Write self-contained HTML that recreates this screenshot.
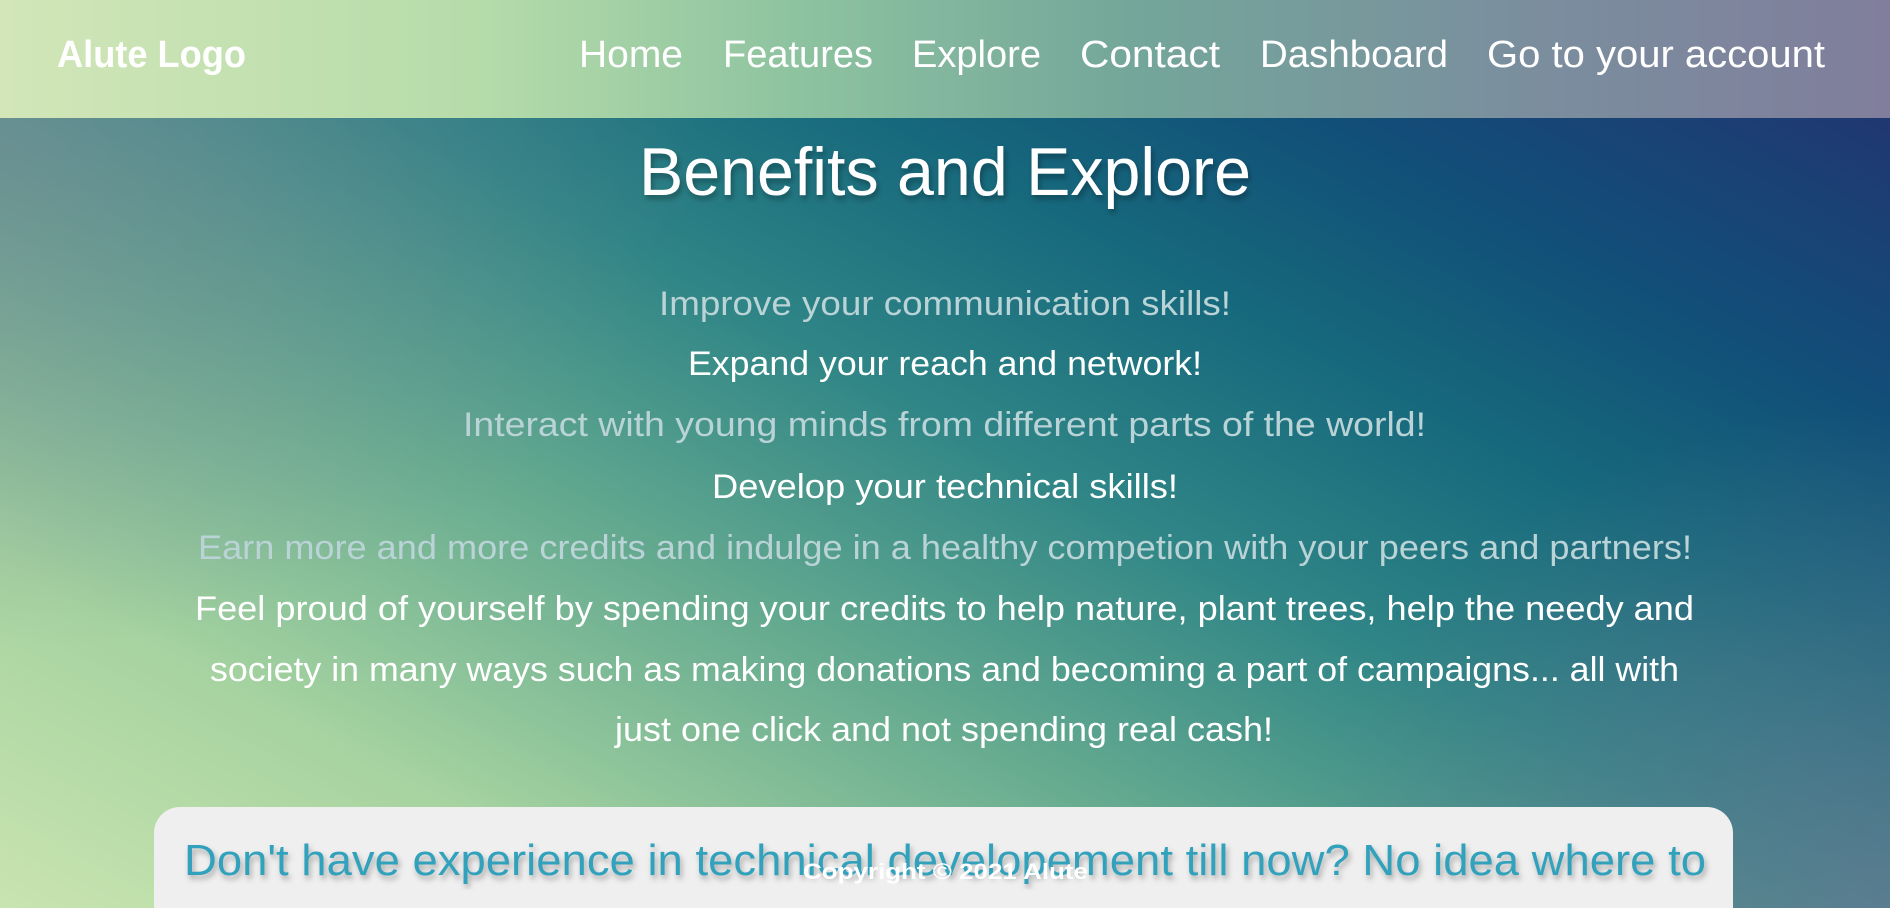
<!DOCTYPE html>
<html><head><meta charset="utf-8"><style>
html,body{margin:0;padding:0;width:1890px;height:908px;overflow:hidden}
.bg{position:absolute;left:0;top:0;width:1890px;height:908px;overflow:hidden;background:
radial-gradient(ellipse 700px 500px at 0px 150px,rgba(120,130,150,0.55),rgba(120,130,150,0) 100%),
radial-gradient(ellipse 600px 500px at 1890px 908px,rgba(120,120,150,0.6),rgba(120,120,150,0) 100%),
linear-gradient(28deg,#c9e4b0 0%,#a6d3a0 18%,#66ab90 36%,#2f8586 52%,#16687c 66%,#114f78 78%,#262e70 100%);}
.nav{position:absolute;left:0;top:0;width:1890px;height:118px;background:linear-gradient(90deg,#d2e6b8 0%,#b6dcaa 25%,#8ec3a0 42%,#74a69a 60%,#7a8f9e 80%,#807e9c 100%);}
.box{position:absolute;left:154px;top:807px;width:1579px;height:101px;background:#efefef;border-radius:26px 26px 0 0}
svg{position:absolute;left:0;top:0}
text{font-family:"Liberation Sans",sans-serif}
</style></head><body>
<div class="bg"></div>
<div class="nav"></div>
<div class="box"></div>
<svg width="1890" height="908">
<defs><filter id="sh"><feDropShadow dx="2" dy="4" stdDeviation="3" flood-color="#000" flood-opacity="0.3"/></filter></defs>
<g fill="#fff" font-size="38">
<text x="57" y="67" font-weight="bold" textLength="189" lengthAdjust="spacingAndGlyphs">Alute Logo</text>
<text x="579" y="67" textLength="104" lengthAdjust="spacingAndGlyphs">Home</text>
<text x="723" y="67" textLength="150" lengthAdjust="spacingAndGlyphs">Features</text>
<text x="912" y="67" textLength="129" lengthAdjust="spacingAndGlyphs">Explore</text>
<text x="1080" y="67" textLength="140" lengthAdjust="spacingAndGlyphs">Contact</text>
<text x="1260" y="67" textLength="188" lengthAdjust="spacingAndGlyphs">Dashboard</text>
<text x="1487" y="67" textLength="338" lengthAdjust="spacingAndGlyphs">Go to your account</text>
<text x="639" y="195" font-size="68" filter="url(#sh)" textLength="612" lengthAdjust="spacingAndGlyphs">Benefits and Explore</text>
</g>
<g font-size="34">
<text x="659" y="315" fill="#b9d3d6" textLength="572" lengthAdjust="spacingAndGlyphs">Improve your communication skills!</text>
<text x="688" y="375" fill="#fff" textLength="514" lengthAdjust="spacingAndGlyphs">Expand your reach and network!</text>
<text x="463" y="436" fill="#b9d3d6" textLength="963" lengthAdjust="spacingAndGlyphs">Interact with young minds from different parts of the world!</text>
<text x="712" y="498" fill="#fff" textLength="466" lengthAdjust="spacingAndGlyphs">Develop your technical skills!</text>
<text x="198" y="559" fill="#b9d3d6" textLength="1494" lengthAdjust="spacingAndGlyphs">Earn more and more credits and indulge in a healthy competion with your peers and partners!</text>
<text x="195" y="620" fill="#fff" textLength="1499" lengthAdjust="spacingAndGlyphs">Feel proud of yourself by spending your credits to help nature, plant trees, help the needy and</text>
<text x="210" y="681" fill="#fff" textLength="1469" lengthAdjust="spacingAndGlyphs">society in many ways such as making donations and becoming a part of campaigns... all with</text>
<text x="615" y="741" fill="#fff" textLength="658" lengthAdjust="spacingAndGlyphs">just one click and not spending real cash!</text>
</g>
<text x="184" y="875" font-size="44" fill="#33a1bb" filter="url(#sh)" textLength="1522" lengthAdjust="spacingAndGlyphs">Don't have experience in technical developement till now? No idea where to</text>
<text x="803" y="879" font-size="22" font-weight="bold" fill="#fff" textLength="285" lengthAdjust="spacingAndGlyphs">Copyright © 2021 Alute</text>
</svg>
</body></html>
